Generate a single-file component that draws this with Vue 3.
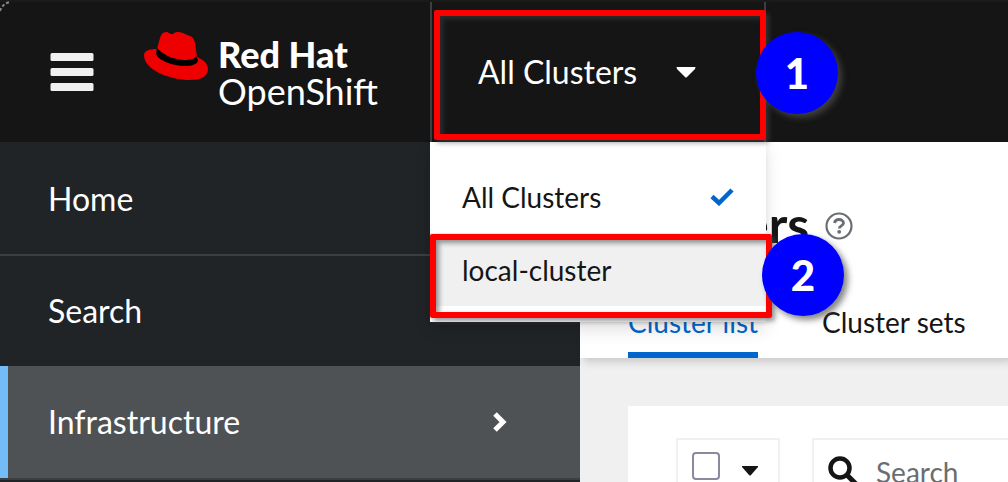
<script setup>
import { ref } from 'vue'

const navItems = ref([
  { label: 'Home', active: false, expandable: false },
  { label: 'Search', active: false, expandable: false },
  { label: 'Infrastructure', active: true, expandable: true },
  { label: '', active: false, expandable: false }
])
const query = ref('')
const allSelected = ref(false)
</script>

<template>
  <div class="page">
    <header class="masthead">
      <div class="brand-area">
        <button class="burger" type="button" aria-label="Global navigation">
          <svg width="44" height="40" viewBox="0 0 44 40" fill="#f0f0f0">
            <rect x="0.5" y="1" width="43" height="8" rx="1.5" />
            <rect x="0.5" y="16" width="43" height="8" rx="1.5" />
            <rect x="0.5" y="31" width="43" height="8" rx="1.5" />
          </svg>
        </button>
        <a class="brand" href="#home">
          <svg class="hat" width="64" height="49" viewBox="0 0 64 49">
            <path fill="#e00" d="M13 17 16 6C17 2 19 0 22 0c3 0 3 2 6 2 2 0 2-2 6-2 5 0 8 3 12 4 3 1 4 3 5 7l2 14c7 3 11 7 11 12 0 8-8 11-18 11C26 48 0 38 0 23c0-4 5-6 13-6z" />
            <path fill="#000" d="M13 16l-1 5c0 6 15 13 29 13 7 0 13-2 13-6l-2-4c-1 3-6 4-11 4-11 0-22-5-28-12z" />
          </svg>
          <span class="brand-name"><strong>Red Hat</strong><span>OpenShift</span></span>
        </a>
      </div>
      <div class="switcher">
        <button class="switcher-toggle" type="button" aria-expanded="true">
          <span>All Clusters</span>
          <svg width="20" height="11" viewBox="0 0 20 11"><path fill="#fff" d="M1 0h18q1 0 0 2l-8 8q-1 1-2 0L1 2q-1-2 0-2z" /></svg>
        </button>
        <span class="frame frame-toggle"></span>
        <span class="step step-toggle">1</span>
        <div class="menu" role="menu">
          <button class="option" type="button" role="menuitem">
            <span>All Clusters</span>
            <svg width="24" height="18" viewBox="0 0 24 18"><path fill="none" stroke="#06c" stroke-width="4.500" d="M2 8.500l7 6.500L22 2" /></svg>
          </button>
          <button class="option option-hover" type="button" role="menuitem">
            <span>local-cluster</span>
          </button>
          <span class="frame frame-option"></span>
          <span class="step step-option">2</span>
        </div>
      </div>
      <svg class="corner" width="12" height="12" viewBox="0 0 12 12"><path d="M0 11Q2 4 10 2" fill="none" stroke="#888" stroke-width="2" stroke-dasharray="3 2" /></svg>
    </header>

    <div class="body">
      <nav class="sidebar">
        <a v-for="(item, i) in navItems" :key="i" href="#nav" class="nav-item" :class="{ active: item.active }">
          <span>{{ item.label }}</span>
          <svg v-if="item.expandable" width="16" height="20" viewBox="0 0 16 20"><path d="M3 2l8 8-8 8" fill="none" stroke="#fff" stroke-width="5" /></svg>
        </a>
      </nav>
      <main class="content">
        <section class="page-head">
          <div class="title-row">
            <h1>Clusters</h1>
            <button class="help" type="button" aria-label="Help">
              <svg width="28" height="28" viewBox="0 0 28 28">
                <circle cx="14" cy="14" r="12.500" fill="none" stroke="#6a6e73" stroke-width="2.200" />
                <path d="M9.500 11C10 8.500 12 7.500 14 7.500c2.500 0 4.500 1.500 4.500 3.500 0 3-4.200 2.800-4.200 5.500" fill="none" stroke="#6a6e73" stroke-width="2.800" />
                <circle cx="14.200" cy="19.800" r="1.900" fill="#6a6e73" />
              </svg>
            </button>
          </div>
          <div class="tabs">
            <a class="tab current" href="#list">Cluster list</a>
            <a class="tab" href="#sets">Cluster sets</a>
          </div>
        </section>
        <section class="panel">
          <div class="bulk">
            <input v-model="allSelected" class="tick" type="checkbox" aria-label="Select all" />
            <button class="bulk-toggle" type="button" aria-label="Selection options">
              <svg width="16" height="10" viewBox="0 0 16 10"><path fill="#151515" d="M0 0h16v1L9 9q-1 1-2 0L0 1z" /></svg>
            </button>
          </div>
          <div class="search">
            <svg width="30" height="30" viewBox="0 0 30 30">
              <circle cx="12" cy="12" r="9.500" fill="none" stroke="#151515" stroke-width="4.500" />
              <path d="M19 19l9 9" stroke="#151515" stroke-width="5" />
            </svg>
            <input v-model="query" type="text" placeholder="Search" aria-label="Search" />
          </div>
        </section>
      </main>
    </div>
  </div>
</template>

<style>
body {
  margin: 0;
  overflow: hidden;
}
</style>

<style scoped>
.page {
  box-sizing: border-box;
  height: 100vh;
  display: flex;
  flex-direction: column;
  overflow: hidden;
  font-family: Lato, "Liberation Sans", sans-serif;
  font-size: 32px;
  line-height: 40px;
  color: #151515;
}
button {
  font: inherit;
  color: inherit;
  background: none;
  border: 0;
  padding: 0;
  margin: 0;
  text-align: left;
}
a {
  color: inherit;
  text-decoration: none;
}
svg {
  display: block;
  flex: none;
}
.masthead {
  position: relative;
  z-index: 2;
  flex: none;
  display: flex;
  height: 140px;
  border-top: 2px solid #1a1a16;
  background: #151515;
  color: #fff;
}
.corner {
  position: absolute;
  left: 0;
  top: -2px;
}
.brand-area {
  box-sizing: border-box;
  flex: none;
  width: 430px;
  padding-left: 50px;
  display: flex;
  align-items: center;
  gap: 50px;
}
.brand {
  display: flex;
  gap: 10px;
}
.brand-name {
  display: flex;
  flex-direction: column;
  padding: 4px 0 2px;
  font-size: 36px;
  line-height: 37px;
}
.brand-name strong {
  font-weight: 900;
}
.switcher {
  position: relative;
  box-sizing: border-box;
  flex: none;
  width: 336px;
  border: solid #3c3f42;
  border-width: 0 2px;
}
.switcher-toggle {
  display: flex;
  align-items: center;
  justify-content: space-between;
  width: 100%;
  height: 100%;
  padding: 0 68px 0 46px;
}
.frame {
  position: absolute;
  box-sizing: border-box;
  border: 6px solid #f00;
  border-radius: 2px;
  box-shadow: 3px 3px 5px rgba(80, 80, 80, 0.6), inset 3px 3px 5px rgba(80, 80, 80, 0.6);
  pointer-events: none;
}
.frame-toggle {
  inset: 8px -2px 2px 2px;
  z-index: 2;
  box-shadow: 3px 3px 5px rgba(80, 80, 80, 0.5), inset 3px 3px 5px rgba(80, 80, 80, 0.4);
}
.frame-option {
  inset: 92px -6px 4px 0;
}
.step {
  position: absolute;
  z-index: 3;
  width: 82px;
  height: 82px;
  border-radius: 50%;
  background: #00f;
  color: #fff;
  font-weight: 900;
  font-size: 42px;
  line-height: 82px;
  text-align: center;
  box-shadow: 4px 4px 6px rgba(80, 80, 80, 0.7);
}
.step-toggle {
  right: -74px;
  top: 30px;
}
.step-option {
  right: -78px;
  top: 92px;
}
.menu {
  position: absolute;
  top: 100%;
  left: -2px;
  right: -2px;
  padding: 18px 0 16px;
  background: #fff;
  color: #151515;
  font-size: 28px;
  box-shadow: 0 8px 16px rgba(3, 3, 3, 0.12), 0 0 6px rgba(3, 3, 3, 0.06);
}
.option {
  display: flex;
  align-items: center;
  justify-content: space-between;
  width: 100%;
  height: 73px;
  padding: 0 32px;
}
.option-hover {
  background: #f0f0f0;
}
.body {
  flex: 1;
  display: flex;
  min-height: 0;
}
.sidebar {
  flex: none;
  width: 580px;
  background: #212427;
  color: #fff;
}
.nav-item {
  box-sizing: border-box;
  display: flex;
  align-items: center;
  justify-content: space-between;
  height: 112px;
  padding: 0 72px 0 48px;
  border-top: 2px solid #3c3f42;
}
.nav-item:first-child {
  border-top-color: transparent;
}
.nav-item.active {
  padding-left: 40px;
  border-top: 0;
  border-left: 8px solid #73bcf7;
  background: #4f5255;
}
.content {
  flex: 1;
  min-width: 0;
  background: #f0f0f0;
  display: flex;
  flex-direction: column;
  gap: 48px;
}
.page-head {
  flex: none;
  padding: 48px 0 0 48px;
  background: #fff;
  box-shadow: 4px 4px 8px rgba(3, 3, 3, 0.16);
}
.title-row {
  display: flex;
  align-items: center;
  gap: 16px;
  height: 72px;
}
h1 {
  margin: 0;
  padding-bottom: 4px;
  font-size: 50px;
  line-height: 64px;
  font-weight: 700;
}
.tabs {
  display: flex;
  gap: 64px;
  margin-top: 40px;
  font-size: 28px;
}
.tab {
  height: 50px;
  border-bottom: 6px solid transparent;
  white-space: nowrap;
}
.tab.current {
  color: #06c;
  border-color: #06c;
}
.panel {
  flex: 1;
  display: flex;
  align-items: flex-start;
  gap: 32px;
  margin-left: 48px;
  padding: 32px 0 0 48px;
  background: #fff;
}
.bulk,
.search {
  box-sizing: border-box;
  height: 72px;
  border: 2px solid #f0f0f0;
  display: flex;
  align-items: flex-start;
}
.bulk {
  flex: none;
  padding: 12px 20px 0 14px;
  gap: 22px;
}
.tick {
  appearance: none;
  box-sizing: border-box;
  width: 28px;
  height: 28px;
  margin: 0;
  border: 2px solid #8a8a9c;
  border-radius: 4px;
  background: #fff;
}
.bulk-toggle {
  padding-top: 14px;
}
.search {
  flex: 1;
  min-width: 0;
  border-right: 0;
  padding: 16px 0 0 14px;
  gap: 18px;
}
.search input {
  flex: 1;
  min-width: 0;
  padding: 0;
  border: 0;
  outline: 0;
  background: none;
  font: inherit;
  font-size: 28px;
  line-height: 32px;
  color: #151515;
}
.search input::placeholder {
  color: #6a6e73;
  opacity: 1;
}
</style>
